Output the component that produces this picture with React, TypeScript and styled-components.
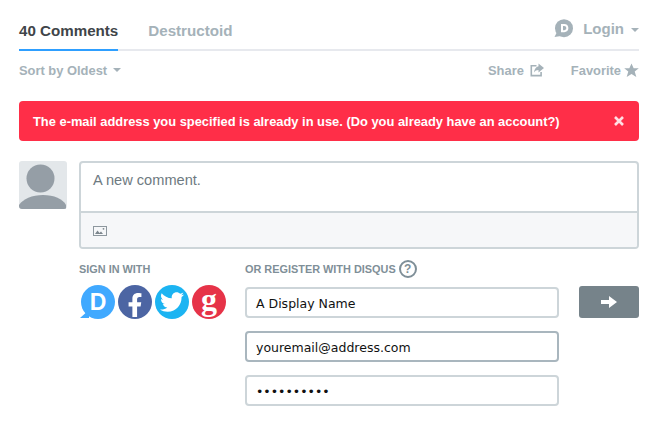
import { createGlobalStyle, styled } from 'styled-components';
import { FaFacebookF, FaTwitter } from 'react-icons/fa';

const GlobalStyle = createGlobalStyle`
  html, body {
    margin: 0;
    padding: 0;
    background: #fff;
  }
  body {
    font-family: "Liberation Sans", Arial, sans-serif;
  }
`

const Page = styled.div`
  width: 659px;
  height: 422px;
  box-sizing: border-box;
  padding: 0 20px 0 19px;
  overflow: hidden;
`

const NavBar = styled.div`
  display: flex;
  align-items: flex-end;
  height: 51px;
  border-bottom: 2px solid #e7e9ee;
  box-sizing: border-box;
`

const Tab = styled.div<{ $active?: boolean }>`
  height: 51px;
  box-sizing: border-box;
  padding-top: 22px;
  margin-right: 30px;
  margin-bottom: -2px;
  font-size: 15.15px;
  line-height: 17px;
  font-weight: 700;
  color: ${(p) => (p.$active ? '#3f4549' : '#a5b2b9')};
  border-bottom: 2px solid ${(p) => (p.$active ? '#2e9fff' : 'transparent')};
`

const Login = styled.div`
  margin-left: auto;
  height: 49px;
  display: flex;
  align-items: flex-start;
  padding-top: 19px;
  box-sizing: border-box;
  font-size: 15px;
  line-height: 20px;
  font-weight: 700;
  color: #a5b2b9;
`

const LoginLabel = styled.span`
  margin: 0 7px 0 10px;
`

const Caret = styled.span<{ $size?: number }>`
  display: inline-block;
  border-left: ${(p) => p.$size ?? 4}px solid transparent;
  border-right: ${(p) => p.$size ?? 4}px solid transparent;
  border-top: ${(p) => p.$size ?? 4}px solid #a5b2b9;
`

const LoginCaret = styled(Caret)`
  margin-top: 9px;
`

const SubBar = styled.div`
  display: flex;
  align-items: center;
  height: 20px;
  margin-top: 9px;
  font-size: 12.9px;
  font-weight: 700;
  color: #a5b2b9;
`

const SortBy = styled.div`
  display: flex;
  align-items: center;
  gap: 6px;
  margin-right: auto;
`

const Action = styled.div<{ $gap: number }>`
  display: flex;
  align-items: center;
  gap: ${(p) => p.$gap}px;
  & + & {
    margin-left: 26px;
  }
`

const Alert = styled.div`
  display: flex;
  align-items: center;
  justify-content: space-between;
  height: 40px;
  margin-top: 21px;
  padding: 0 15px 0 14px;
  background: #ff2e48;
  border-radius: 4px;
  color: #fff;
  font-size: 12.88px;
  font-weight: 700;
`

const CloseIcon = styled.svg`
  width: 10px;
  height: 10px;
  opacity: 0.85;
`

const Composer = styled.div`
  display: flex;
  gap: 12px;
  margin-top: 20px;
`

const Avatar = styled.div`
  width: 48px;
  height: 48px;
  flex: none;
  border-radius: 3px;
  overflow: hidden;
  background: #e3e7ea;
  svg {
    display: block;
  }
`

const Main = styled.div`
  flex: 1;
  min-width: 0;
`

const TextBox = styled.div`
  height: 88px;
  box-sizing: border-box;
  border: 2px solid #cdd5d9;
  border-radius: 4px;
  display: flex;
  flex-direction: column;
`

const TextArea = styled.div`
  height: 48px;
  flex: none;
  box-sizing: border-box;
  padding: 8px 12px;
  font-size: 14.6px;
  line-height: 18px;
  color: #6e7a81;
`

const MediaBar = styled.div`
  flex: 1;
  display: flex;
  align-items: center;
  padding: 0 12px;
  background: #f6f7f9;
  border-top: 2px solid #cdd5d9;
  border-radius: 0 0 2px 2px;
`

const AuthRow = styled.div`
  display: flex;
  margin-top: 10px;
`

const SignIn = styled.div`
  width: 166px;
  flex: none;
`

const Heading = styled.div`
  display: flex;
  align-items: center;
  height: 20px;
  gap: 3px;
  font-size: 10.9px;
  font-weight: 700;
  color: #7f8f98;
`

const Providers = styled.div`
  display: flex;
  margin: 6px 0 0 2px;
  gap: 3px;
`

const Provider = styled.div<{ $color: string }>`
  position: relative;
  width: 34px;
  height: 34px;
  border-radius: 50%;
  overflow: ${(p) => (p.$color === '#4c65a3' ? 'hidden' : 'visible')};
  background: ${(p) => p.$color};
  color: #fff;
  display: flex;
  align-items: center;
  justify-content: center;
  svg {
    display: block;
  }
`

const DisqusLetter = styled.span`
  font-size: 23px;
  font-weight: 700;
  line-height: 1;
  position: relative;
`

const GoogleLetter = styled.span`
  font-family: "Liberation Serif", "Times New Roman", serif;
  font-size: 32px;
  font-weight: 700;
  line-height: 1;
  margin-top: -7px;
`

const FacebookGlyph = styled(FaFacebookF)`
  margin-top: 6px;
`

const BubbleTail = styled.span`
  position: absolute;
  left: -1px;
  bottom: 1px;
  width: 0;
  height: 0;
  border-top: 8px solid transparent;
  border-right: 9px solid #40a9ff;
`

const Register = styled.div`
  width: 314px;
  flex: none;
`

const Help = styled.span`
  width: 18px;
  height: 18px;
  box-sizing: border-box;
  border: 2px solid #7f8f98;
  border-radius: 50%;
  display: inline-flex;
  align-items: center;
  justify-content: center;
  font-size: 12px;
  color: #7f8f98;
`

const Fields = styled.div`
  display: flex;
  flex-direction: column;
  gap: 13px;
  margin-top: 8px;
`

const Field = styled.div<{ $focused?: boolean }>`
  height: 31px;
  box-sizing: border-box;
  padding: 1px 9px 0;
  display: flex;
  align-items: center;
  border: 2px solid ${(p) => (p.$focused ? '#a9b6be' : '#cdd5d9')};
  border-radius: 4px;
  font-family: "DejaVu Sans", Verdana, sans-serif;
  font-size: 12.5px;
  color: #111;
`

const Submit = styled.div`
  width: 60px;
  height: 32px;
  flex: none;
  margin: 27px 0 0 20px;
  border-radius: 3px;
  background: #76838a;
  display: flex;
  align-items: center;
  justify-content: center;
`

const App = () => {
  return (
    <Page>
      <GlobalStyle />
      <NavBar>
        <Tab $active>40 Comments</Tab>
        <Tab>Destructoid</Tab>
        <Login>
          <svg width="19" height="19" viewBox="0 0 19 19">
            <circle cx="10" cy="9.2" r="9" fill="#a5b2b9" />
            <path d="M3 13 L0.5 18 L7 17 Z" fill="#a5b2b9" />
            <path fillRule="evenodd" fill="#fff" d="M7 5h3.2c2.6 0 4.2 1.6 4.2 4.1s-1.6 4.1-4.2 4.1H7zM9 6.9v4.4h1.1c1.4 0 2.2-.9 2.2-2.2s-.8-2.2-2.2-2.2z" />
          </svg>
          <LoginLabel>Login</LoginLabel>
          <LoginCaret />
        </Login>
      </NavBar>

      <SubBar>
        <SortBy>
          Sort by Oldest
          <Caret />
        </SortBy>
        <Action $gap={5}>
          Share
          <svg width="16" height="14" viewBox="0 0 15 14">
            <path d="M1 2h6v1.6H2.6v8.2h8.2V9h1.6v4.4H1z" fill="#a5b2b9" />
            <path d="M9 0.5 14.5 5 9 9.5V7C7 7 5.5 7.8 4.5 9.5 4.8 6.5 6.3 3.8 9 3.3z" fill="#a5b2b9" />
          </svg>
        </Action>
        <Action $gap={3}>
          Favorite
          <svg width="15" height="15" viewBox="0 0 14 14">
            <path d="M7 0.5 9 5h4.8l-3.8 3 1.5 5L7 10.2 2.5 13 4 8 .2 5H5z" fill="#a5b2b9" />
          </svg>
        </Action>
      </SubBar>

      <Alert>
        The e-mail address you specified is already in use. (Do you already have an account?)
        <CloseIcon viewBox="0 0 10 10">
          <path d="M1 1 9 9M9 1 1 9" stroke="#fff" strokeWidth="2.6" />
        </CloseIcon>
      </Alert>

      <Composer>
        <Avatar>
          <svg width="48" height="48" viewBox="0 0 48 48">
            <circle cx="21.5" cy="17.5" r="14" fill="#959ea6" />
            <path d="M0 48V44C4 38 13 34 24 34S44 38 47 44V48Z" fill="#959ea6" />
          </svg>
        </Avatar>
        <Main>
          <TextBox>
            <TextArea>A new comment.</TextArea>
            <MediaBar>
              <svg width="14" height="11" viewBox="0 0 14 11">
                <rect x="0.5" y="1.5" width="13" height="9" fill="none" stroke="#8d979e" />
                <path d="M2 9 4.5 5.5 6.5 8 8 6.5 10 9Z" fill="#7c868d" />
                <circle cx="10.5" cy="3.8" r="0.9" fill="#7c868d" />
              </svg>
            </MediaBar>
          </TextBox>
          <AuthRow>
            <SignIn>
              <Heading>SIGN IN WITH</Heading>
              <Providers>
                <Provider $color="#40a9ff">
                  <BubbleTail />
                  <DisqusLetter>D</DisqusLetter>
                </Provider>
                <Provider $color="#4c65a3">
                  <FacebookGlyph size={24} />
                </Provider>
                <Provider $color="#1cb4f2">
                  <FaTwitter size={24} />
                </Provider>
                <Provider $color="#e63348">
                  <GoogleLetter>g</GoogleLetter>
                </Provider>
              </Providers>
            </SignIn>
            <Register>
              <Heading>
                OR REGISTER WITH DISQUS
                <Help>?</Help>
              </Heading>
              <Fields>
                <Field>A Display Name</Field>
                <Field $focused>youremail@address.com</Field>
                <Field>••••••••••</Field>
              </Fields>
            </Register>
            <Submit>
              <svg width="18" height="14" viewBox="0 0 18 14">
                <path d="M1 5H9V1L17 7 9 13V9H1Z" fill="#fff" />
              </svg>
            </Submit>
          </AuthRow>
        </Main>
      </Composer>
    </Page>
  );
};

export default App;
